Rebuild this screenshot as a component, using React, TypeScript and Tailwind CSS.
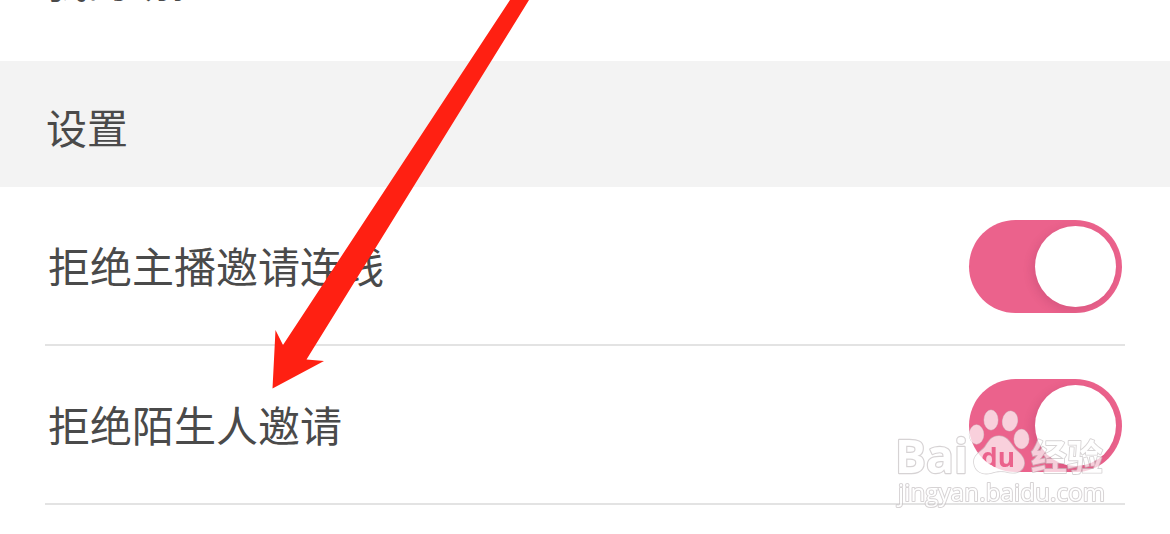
import React from 'react';

const Toggle = () => (
  <button type="button" className="mt-0.5 h-[93px] w-[153px] flex-none rounded-full bg-[#eb628c] p-1.5 flex justify-end overflow-hidden">
    <span className="block size-[81px] rounded-full bg-white shadow-[-3px_3px_10px_rgba(120,30,70,0.16)]" />
  </button>
);

const SettingRow = ({ label }: { label: string }) => (
  <div className="mx-[45px] h-[159px] flex items-center justify-between border-b-2 border-[#e3e3e3] px-[3px]">
    <span className="mb-0.5">{label}</span>
    <Toggle />
  </div>
);

const Arrow = () => (
  <svg className="absolute left-0 top-0" width="1170" height="534" viewBox="0 0 1170 534">
    <path d="M510 0L283 345L275.5 330L272.5 388.5L324 361L306.5 359.5L529 0Z" fill="#ff2012" />
  </svg>
);

const Watermark = () => (
  <svg
    className="absolute left-[880px] top-[390px] opacity-70 [paint-order:stroke]"
    width="240"
    height="130"
    viewBox="880 390 240 130"
    fill="white"
    stroke="#c6c1c3"
    strokeWidth="2.4"
    strokeLinejoin="round"
  >
    <mask id="pad" maskUnits="userSpaceOnUse" x="960" y="425" width="80" height="60">
      <rect x="960" y="425" width="80" height="60" fill="white" stroke="none" />
      <text x="981" y="467" fontSize="27" fontWeight="700" fill="black" stroke="none" textLength="34" lengthAdjust="spacingAndGlyphs" className="font-['Open_Sans',sans-serif]">
        du
      </text>
    </mask>
    <text x="895" y="473" fontSize="47" fontWeight="700" textLength="73" lengthAdjust="spacingAndGlyphs" className="font-['Open_Sans',sans-serif]">
      Bai
    </text>
    <g strokeWidth="1">
      <ellipse cx="976.5" cy="434.5" rx="7.2" ry="9.7" />
      <ellipse cx="991" cy="420" rx="7" ry="10" />
      <ellipse cx="1010" cy="421" rx="7.5" ry="10" transform="rotate(10 1010 421)" />
      <ellipse cx="1021.5" cy="439" rx="7.5" ry="9.7" />
    </g>
    <path
      mask="url(#pad)"
      strokeWidth="1.6"
      d="M999 436C1009 436 1011 446 1017 451C1023 456 1025 460 1024 465C1022 473 1014 474 1005 471.5C1000 471 996 471 991 473C983 475 975 472 974 463C973 455 981 452 985 447C989 441 991 436 999 436Z"
    />
    <text x="1031" y="470.5" fontSize="36" fontWeight="700" textLength="72" strokeWidth="1.8" className="font-['Noto_Sans_CJK_SC',sans-serif]">
      经验
    </text>
    <text x="898" y="501" fontSize="24" textLength="207" strokeWidth="2" className="font-['Open_Sans',sans-serif]">
      jingyan.baidu.com
    </text>
  </svg>
);

const App = () => {
  return (
    <main className="relative h-[534px] w-[1170px] overflow-hidden bg-white text-[42px] leading-[60px] text-[#4a4a4a] font-['Noto_Sans_CJK_SC',sans-serif]">
      <div className="h-[61px] overflow-hidden pl-[46px]">
        <div className="-mt-[50px]">我的场控</div>
      </div>
      <h2 className="h-[126px] flex items-center bg-[#f3f3f3] pl-[46px] pt-1 text-[41px]">设置</h2>
      <SettingRow label="拒绝主播邀请连线" />
      <SettingRow label="拒绝陌生人邀请" />
      <Arrow />
      <Watermark />
    </main>
  );
};

export default App;
